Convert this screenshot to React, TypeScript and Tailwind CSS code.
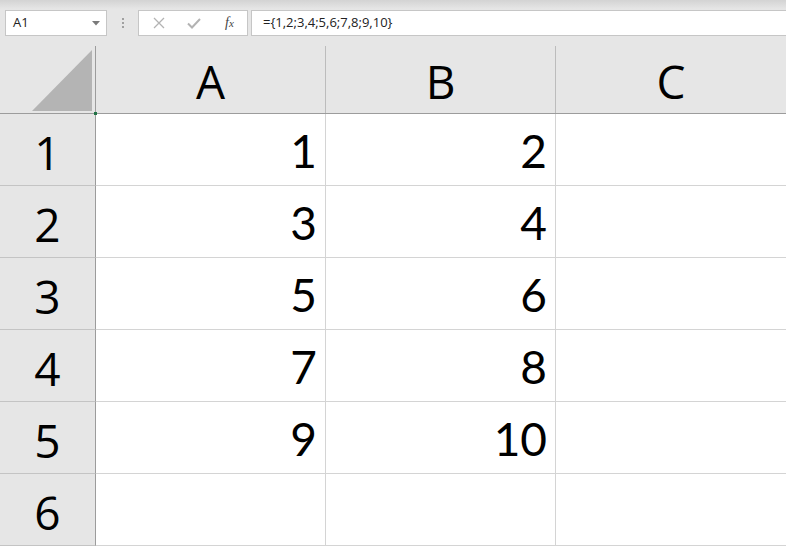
import React from 'react';

const cols = ['A', 'B', 'C'];
const rows: (number | null)[][] = [
  [1, 2, null],
  [3, 4, null],
  [5, 6, null],
  [7, 8, null],
  [9, 10, null],
  [null, null, null],
];

const Toolbar = () => (
  <div className="h-[46px] flex items-start pt-[10px] bg-[linear-gradient(to_bottom,#d3d3d3_0px,#e6e6e6_9px,#e6e6e6_100%)] font-['Open_Sans',sans-serif]">
    {/* name box */}
    <div className="ml-[5px] w-[102px] h-[26px] bg-white border border-[#c6c6c6] flex items-center pl-[7px] pr-[6px]">
      <span className="text-[13px] text-[#222] flex-1">A1</span>
      <svg width="8" height="5" viewBox="0 0 8 5">
        <path d="M0 0 L8 0 L4 4.5 Z" fill="#7a7a7a" />
      </svg>
    </div>
    {/* grip dots */}
    <div className="w-[31px] h-[26px] flex flex-col items-center justify-center gap-[2px]">
      <span className="w-[2px] h-[2px] bg-[#a0a0a0]" />
      <span className="w-[2px] h-[2px] bg-[#a0a0a0]" />
      <span className="w-[2px] h-[2px] bg-[#a0a0a0]" />
    </div>
    {/* cancel / enter / fx */}
    <div className="w-[110px] h-[26px] bg-white border border-[#c6c6c6] flex items-center">
      <div className="w-[37px] flex justify-center pl-[2px]">
        <svg width="12" height="12" viewBox="0 0 12 12">
          <path d="M1 1 L11 11 M11 1 L1 11" stroke="#b3b3b3" strokeWidth="1.3" />
        </svg>
      </div>
      <div className="w-[36px] flex justify-center">
        <svg width="14" height="11" viewBox="0 0 14 11">
          <path d="M1 5.5 L5 9.5 L13 1" stroke="#b3b3b3" strokeWidth="2" fill="none" />
        </svg>
      </div>
      <div className="flex-1 flex justify-center">
        <span className="font-['Liberation_Serif',serif] italic text-[14px] text-[#444] leading-none">
          f<span className="text-[11px]">x</span>
        </span>
      </div>
    </div>
    {/* formula input */}
    <div className="ml-[3px] flex-1 h-[26px] bg-white border-y border-l border-[#c6c6c6] flex items-center pl-[11px]">
      <span className="text-[13px] text-[#222]">={'{'}1,2;3,4;5,6;7,8;9,10{'}'}</span>
    </div>
  </div>
);

export default function App() {
  return (
    <div className="w-[786px] h-[546px] overflow-hidden bg-white">
      <Toolbar />
      {/* header row */}
      <div className="flex h-[68px] bg-[#e6e6e6] border-b border-[#9c9c9c]">
        <div className="relative w-[96px] border-r border-[#9c9c9c] flex items-end justify-end pr-[3px] pb-[2px]">
          <svg width="60" height="61" viewBox="0 0 60 61">
            <path d="M60 0 L60 61 L0 61 Z" fill="#b4b4b4" />
          </svg>
          <span className="absolute right-[-2px] bottom-[-2px] w-[3px] h-[3px] bg-[#217346]" />
        </div>
        {cols.map((c, i) => (
          <div
            key={c}
            className={`flex items-end justify-center pb-[9px] font-['Open_Sans',sans-serif] text-[46px] leading-none text-black ${
              i < 2 ? 'w-[230px] border-r border-[#bcbcbc]' : 'flex-1'
            }`}
          >
            {c}
          </div>
        ))}
      </div>
      {/* data rows */}
      {rows.map((r, ri) => (
        <div key={ri} className="flex h-[72px]">
          <div className="w-[96px] bg-[#e6e6e6] border-r border-b border-r-[#9c9c9c] border-b-[#c4c4c4] flex items-end justify-center pb-[10px] font-['Open_Sans',sans-serif] text-[46px] leading-none text-black">
            {ri + 1}
          </div>
          {r.map((v, ci) => (
            <div
              key={ci}
              className={`border-b border-[#d4d4d4] flex items-end justify-end pr-[8px] pb-[11px] font-['Lato',sans-serif] text-[46px] leading-none text-black ${
                ci < 2 ? 'w-[230px] border-r' : 'flex-1'
              }`}
            >
              {v ?? ''}
            </div>
          ))}
        </div>
      ))}
    </div>
  );
}
